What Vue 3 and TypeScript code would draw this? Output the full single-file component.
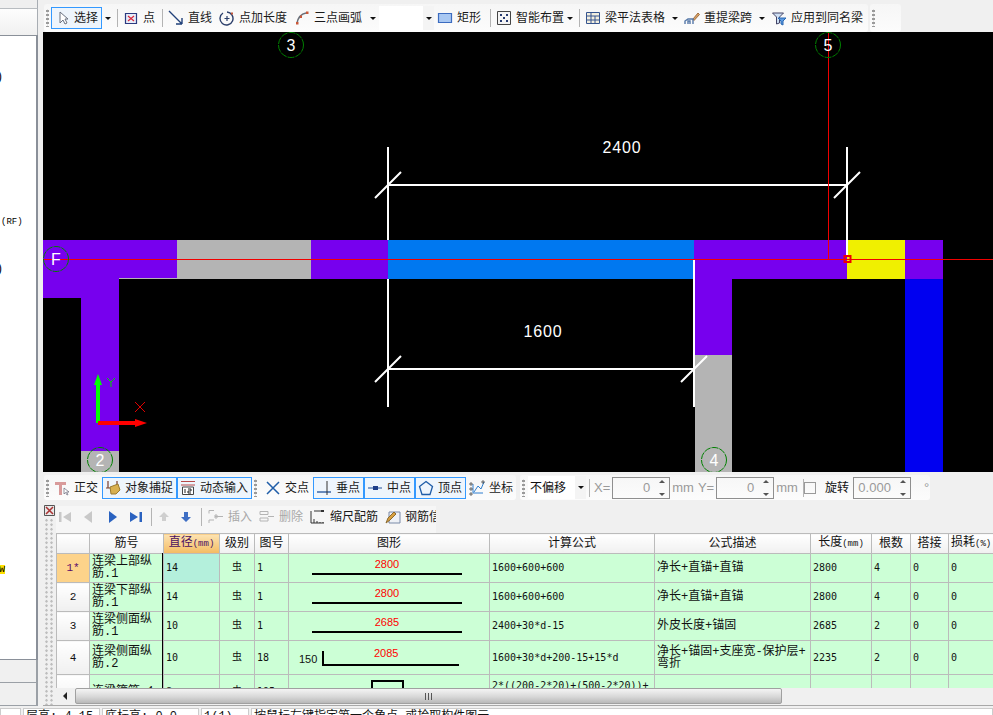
<script setup lang="ts">
type Shape = { d: string; s?: string; f?: string; w?: number }
type Tool = {
  kind?: 'tool' | 'sep' | 'grip' | 'caret' | 'combo'
  label?: string
  icon?: string
  w: number
  on?: boolean
  off?: boolean
}

const icons: Record<string, Shape[]> = {
  select: [{ d: 'M6 2v11l3-3 2 4 2-1-2-4h3z', s: '#6b7280', f: '#fff' }],
  point: [
    { d: 'M2.5 3.5h11v10h-11z', s: '#2b3a80', f: '#e8ecf8', w: 1.2 },
    { d: 'M5 6l6 5M11 6l-6 5', s: '#d9263a', w: 1.2 },
  ],
  line: [{ d: 'M1 1l13 13M14 14v-6M14 14H8', s: '#21417a', w: 1.4 }],
  ptlen: [
    { d: 'M4 3a6.5 6.5 0 1 0 4-1', s: '#2c3f6b', w: 1.4 },
    { d: 'M8 6v5M5.5 8.5h5', s: '#2c3f6b', w: 1.2 },
    { d: 'M12 2.5h2v2h-2z', f: '#c0563a' },
  ],
  arc: [
    { d: 'M3 13C4 8 7 4 12 3', s: '#6a6f78', w: 1.5 },
    { d: 'M2 12h2.5v2.5H2zM6 5.5h2V8H6zM12 1.5h2.5V4H12z', f: '#c9583a' },
  ],
  rect: [{ d: 'M1.5 3.5h13v9h-13z', s: '#3c6cc0', f: '#a9c8f2', w: 1.2 }],
  smart: [
    { d: 'M1.5 1.5h13v13h-13z', s: '#444', f: '#f4f4f4' },
    { d: 'M4 4h2v2H4zM10 4h2v2h-2zM4 10h2v2H4zM10 10h2v2h-2zM7 7h2v2H7z', f: '#263a70' },
  ],
  table: [
    { d: 'M1.5 2.5h13v11h-13z', s: '#36558f', f: '#f3efdf' },
    { d: 'M1.5 6h13M1.5 10h13M6 2.5v11M10 6v8', s: '#36558f' },
  ],
  retake: [
    { d: 'M9 9l5-6 1.5 1.5-5.5 6z', f: '#d9a066', s: '#a07040' },
    { d: 'M1 14v-3l3-2h5v5M4 14v-3h2v3', s: '#5678a8', w: 1.4 },
  ],
  apply: [
    { d: 'M1.5 3h11l-4 4v6l-3 1V7z', s: '#446', f: '#cfe0f4' },
    { d: 'M7 8h8l-3 3v4l-2-1v-3z', s: '#2867b2', f: '#5c9ae0' },
  ],
  ortho: [
    { d: 'M1 2h11v3H8v10H5V5H1z', f: '#d89a9a' },
    { d: 'M10 8v6l1.500-1.500 1.500 2.500 1-.5-1.500-2.500H15z', s: '#667', f: '#fff', w: 0.7 },
  ],
  snap: [
    { d: 'M3 1v7M12 1v7M1 8h13', s: '#7a4030', w: 1.2 },
    { d: 'M5 7l8-3 2 6-4 4H6z', f: '#d8b050', s: '#9a7a30' },
  ],
  dyn: [
    { d: 'M1 1.500h14M1 5h14', s: '#b84a4a' },
    { d: 'M2.500 7h11v7.500h-11z', s: '#444', f: '#fff' },
    { d: 'M5 9v4M8 9h3v2H8v2h3', s: '#222' },
  ],
  cross: [{ d: 'M2 2l12 12M14 2L2 14', s: '#1f5da8', w: 1.5 }],
  perp: [
    { d: 'M1 12h14', s: '#1f4f98', w: 1.3 },
    { d: 'M11 1v14', s: '#333' },
  ],
  mid: [
    { d: 'M1 8h14', s: '#1f4f98', w: 1 },
    { d: 'M6 6h5v4H6z', f: '#1f3f88' },
  ],
  vertex: [{ d: 'M8 1.500l6.500 5-2.500 8H4l-2.500-8z', s: '#1f5da8', w: 1.3 }],
  coord: [
    { d: 'M4 4v9h10M5 12l4-6 3 3 3-7', s: '#2f7fd0' },
    { d: 'M1 3h2v2H1zM1 8h2v2H1zM1 13h2v2H1zM13 1h2v2h-2z', s: '#333', w: 0.7 },
  ],
  first: [{ d: 'M2 3h2.500v10H2zM14 3v10L6 8z', f: '#c8c8c8' }],
  prev: [{ d: 'M12 2v12L4 8z', f: '#c8c8c8' }],
  next: [{ d: 'M4 2v12l8-6z', f: '#2a62c0' }],
  last: [{ d: 'M11.500 3H14v10h-2.500zM2 3v10l8-5z', f: '#2a62c0' }],
  up: [{ d: 'M8 3l5 5h-3v4H6V8H3z', f: '#cfcfcf' }],
  down: [{ d: 'M6 3h4v5h3l-5 5-5-5h3z', f: '#3f6fc4' }],
  insert: [{ d: 'M1 1.500h5M1 1.500v3M1 11h5M1 11v3M7 7.500h8M7 6h2v3H7z', s: '#b4b4b4' }],
  remove: [{ d: 'M1 2.500h8v3H1zM1 9h8v3H1zM9 7.500h6', s: '#b4b4b4' }],
  scale: [
    { d: 'M1 2v12M1 14h13M4 14v-4M7 14v-2M10 14v-1M13 14v-1', s: '#333' },
    { d: 'M4 2h10', s: '#333' },
    { d: 'M11 1h3v2h-3z', f: '#333' },
  ],
  rebar: [
    { d: 'M4 3h11v11H4z', s: '#7a8aa8', f: '#eef1f6' },
    { d: 'M1 14l2-5 6-6 2 2-6 6z', f: '#d8a040', s: '#8a6a30' },
  ],
}

const topBar: Tool[] = [
  { kind: 'grip', w: 7 },
  { label: '选择', icon: 'select', w: 51, on: true },
  { kind: 'caret', w: 11 },
  { kind: 'sep', w: 7 },
  { label: '点', icon: 'point', w: 39 },
  { kind: 'sep', w: 6 },
  { label: '直线', icon: 'line', w: 51 },
  { label: '点加长度', icon: 'ptlen', w: 75 },
  { label: '三点画弧', icon: 'arc', w: 75 },
  { kind: 'caret', w: 13 },
  { kind: 'combo', w: 55 },
  { label: '矩形', icon: 'rect', w: 53 },
  { kind: 'sep', w: 6 },
  { label: '智能布置', icon: 'smart', w: 71 },
  { kind: 'caret', w: 11 },
  { kind: 'sep', w: 7 },
  { label: '梁平法表格', icon: 'table', w: 87 },
  { kind: 'caret', w: 12 },
  { label: '重提梁跨', icon: 'retake', w: 75 },
  { kind: 'caret', w: 12 },
  { label: '应用到同名梁', icon: 'apply', w: 100 },
]

const snapBar: Tool[] = [
  { kind: 'grip', w: 7 },
  { label: '正交', icon: 'ortho', w: 51 },
  { label: '对象捕捉', icon: 'snap', w: 75, on: true },
  { label: '动态输入', icon: 'dyn', w: 75, on: true },
  { kind: 'grip', w: 10 },
  { label: '交点', icon: 'cross', w: 51 },
  { label: '垂点', icon: 'perp', w: 51, on: true },
  { label: '中点', icon: 'mid', w: 51, on: true },
  { label: '顶点', icon: 'vertex', w: 51, on: true },
  { label: '坐标', icon: 'coord', w: 49 },
]

const gridBar: Tool[] = [
  { icon: 'first', w: 18 },
  { icon: 'prev', w: 27 },
  { icon: 'next', w: 23 },
  { icon: 'last', w: 24 },
  { kind: 'sep', w: 5 },
  { icon: 'up', w: 22 },
  { icon: 'down', w: 22 },
  { kind: 'sep', w: 8 },
  { label: '插入', icon: 'insert', w: 51, off: true },
  { label: '删除', icon: 'remove', w: 51, off: true },
  { label: '缩尺配筋', icon: 'scale', w: 75 },
  { label: '钢筋信息', icon: 'rebar', w: 54 },
]

const columns = [33, 74, 56, 35, 34, 201, 165, 156, 61, 39, 38, 45]
const headers = ['筋号', '直径', '级别', '图号', '图形', '计算公式', '公式描述', '长度', '根数', '搭接', '损耗']

const rows = [
  { no: '1*', name: '连梁上部纵筋.1', dia: 14, fig: 1, val: 2800, formula: '1600+600+600', desc: '净长+直锚+直锚', len: 2800, n: 4 },
  { no: '2', name: '连梁下部纵筋.1', dia: 14, fig: 1, val: 2800, formula: '1600+600+600', desc: '净长+直锚+直锚', len: 2800, n: 4 },
  { no: '3', name: '连梁侧面纵筋.1', dia: 10, fig: 1, val: 2685, formula: '2400+30*d-15', desc: '外皮长度+锚固', len: 2685, n: 2 },
  { no: '4', name: '连梁侧面纵筋.2', dia: 10, fig: 18, val: 2085, formula: '1600+30*d+200-15+15*d', desc: '净长+锚固+支座宽-保护层+\u200b弯折', len: 2235, n: 2 },
]

const axes = [
  { label: '3', x: 291, y: 45 },
  { label: '5', x: 828, y: 45 },
  { label: 'F', x: 56, y: 259 },
  { label: '2', x: 100, y: 460 },
  { label: '4', x: 714, y: 460 },
]

const spins = [
  { prefix: 'X=', value: '0', suffix: 'mm' },
  { prefix: 'Y=', value: '0', suffix: 'mm' },
]
</script>

<template>
  <div class="app">
    <aside class="side">
      <div class="side-top"></div>
      <div class="side-tab"></div>
      <div class="side-list">
        <span class="tail t1">)</span>
        <span class="tail t2">(RF)</span>
        <span class="tail t3">)</span>
        <span class="tail t4">w</span>
      </div>
      <div class="side-foot"></div>
      <div class="side-foot"></div>
    </aside>

    <main class="main">
      <div class="bar top">
        <div class="pill">
          <template v-for="(t, i) in topBar" :key="i">
            <span v-if="t.kind === 'grip'" class="grip" :style="{ width: t.w + 'px' }"></span>
            <span v-else-if="t.kind === 'sep'" class="sep" :style="{ width: t.w + 'px' }"></span>
            <span v-else-if="t.kind === 'caret'" class="caret" :style="{ width: t.w + 'px' }"></span>
            <span v-else-if="t.kind === 'combo'" class="combo" :style="{ width: t.w + 'px' }"><i class="caret"></i></span>
            <span v-else class="tool" :class="{ on: t.on, off: t.off }" :style="{ width: t.w + 'px' }">
              <svg class="ico" viewBox="0 0 16 16">
                <path v-for="(p, k) in icons[t.icon!]" :key="k" :d="p.d" :stroke="p.s || 'none'" :fill="p.f || 'none'" :stroke-width="p.w || 1" />
              </svg>
              <span>{{ t.label }}</span>
            </span>
          </template>
        </div>
        <div class="pill tail-pill"><span class="grip"></span></div>
      </div>

      <svg class="canvas" viewBox="43 32 950 440" width="950" height="440">
        <rect x="43" y="240" width="134" height="39" fill="#7700ee" />
        <rect x="177" y="240" width="134" height="39" fill="#b4b4b4" />
        <rect x="311" y="240" width="77" height="39" fill="#7700ee" />
        <rect x="388" y="240" width="306" height="39" fill="#0078f0" />
        <rect x="694" y="240" width="153" height="39" fill="#7700ee" />
        <rect x="847" y="240" width="58" height="39" fill="#f0f000" />
        <rect x="905" y="240" width="38" height="39" fill="#7700ee" />
        <rect x="43" y="279" width="76" height="19" fill="#7700ee" />
        <rect x="81" y="298" width="38" height="153" fill="#7700ee" />
        <rect x="81" y="451" width="38" height="21" fill="#b4b4b4" />
        <rect x="119" y="278" width="58" height="1" fill="#b4b4b4" />
        <rect x="695" y="279" width="37" height="76" fill="#7700ee" />
        <rect x="695" y="355" width="37" height="117" fill="#b4b4b4" />
        <rect x="905" y="279" width="38" height="193" fill="#0000f0" />

        <g stroke="#fff" stroke-width="2" fill="none">
          <path d="M388 147V240M388 279V407M847 147V255M694 259V407" />
          <path d="M388 185H847M375 198L401 172M834 198L860 172" />
          <path d="M388 369H694M375 382L401 356M681 382L707 356" />
        </g>
        <path d="M43 259.500H993M828.500 32V259" stroke="#f00000" fill="none" />
        <rect x="844.500" y="256" width="6" height="6" stroke="#f00000" stroke-width="2" fill="none" />

        <g v-for="a in axes" :key="a.label">
          <circle :cx="a.x" :cy="a.y" r="12.500" stroke="#008000" fill="none" stroke-dasharray="7 1" />
          <text :x="a.x" :y="a.y + 6" class="cad-label">{{ a.label }}</text>
        </g>
        <text x="622" y="153" class="cad-dim">2400</text>
        <text x="543" y="337" class="cad-dim">1600</text>

        <path d="M98 423V380" stroke="#00ff00" stroke-width="4" />
        <path d="M98 374L102 385H94z" fill="#00ff00" />
        <path d="M98 423H136" stroke="#ff0000" stroke-width="4" />
        <path d="M147 423L135 419V427z" fill="#ff0000" />
        <path d="M107 378L111 382L115 378M111 382V387" stroke="#00d000" fill="none" />
        <path d="M135 402L145 412M145 402L135 412" stroke="#e00000" fill="none" />
      </svg>

      <div class="bar snap">
        <div class="pill short">
          <template v-for="(t, i) in snapBar" :key="i">
            <span v-if="t.kind === 'grip'" class="grip" :style="{ width: t.w + 'px' }"></span>
            <span v-else class="tool" :class="{ on: t.on }" :style="{ width: t.w + 'px' }">
              <svg class="ico" viewBox="0 0 16 16">
                <path v-for="(p, k) in icons[t.icon!]" :key="k" :d="p.d" :stroke="p.s || 'none'" :fill="p.f || 'none'" :stroke-width="p.w || 1" />
              </svg>
              <span>{{ t.label }}</span>
            </span>
          </template>
        </div>
        <div class="pill short offset">
          <span class="grip"></span>
          <span class="combo offset-combo">不偏移<i class="caret"></i></span>
          <span class="sep"></span>
          <template v-for="s in spins" :key="s.prefix">
            <span class="dim-label">{{ s.prefix }}</span>
            <span class="spin">{{ s.value }}<i class="arrows"></i></span>
            <span class="dim-label">{{ s.suffix }}</span>
          </template>
          <span class="sep"></span>
          <span class="check"></span>
          <span class="rotate">旋转</span>
          <span class="spin">0.000<i class="arrows"></i></span>
          <span class="dim-label deg">°</span>
        </div>
      </div>

      <div class="lower">
        <div class="strip">
          <svg class="close" viewBox="0 0 11 11"><path d="M.5 .5h10v10H.500z" fill="#e8e8e8" stroke="#555" /><path d="M2 2l7 7M9 2l-7 7" stroke="#a33" stroke-width="1.500" /></svg>
          <div class="dots"></div>
        </div>
        <div class="sheet">
          <div class="gridbar">
            <template v-for="(t, i) in gridBar" :key="i">
              <span v-if="t.kind === 'sep'" class="sep" :style="{ width: t.w + 'px' }"></span>
              <span v-else class="tool" :class="{ off: t.off, solo: !t.label }" :style="{ width: t.w + 'px' }">
                <svg class="ico" viewBox="0 0 16 16">
                  <path v-for="(p, k) in icons[t.icon!]" :key="k" :d="p.d" :stroke="p.s || 'none'" :fill="p.f || 'none'" :stroke-width="p.w || 1" />
                </svg>
                <span v-if="t.label">{{ t.label }}</span>
              </span>
            </template>
          </div>

          <div class="table-wrap">
            <table>
              <colgroup>
                <col v-for="(c, i) in columns" :key="i" :style="{ width: c + 'px' }" />
              </colgroup>
              <thead>
                <tr>
                  <th></th>
                  <th v-for="h in headers" :key="h" :class="{ picked: h === '直径' }">
                    {{ h }}<small v-if="h === '直径' || h === '长度'">(mm)</small><small v-if="h === '损耗'">(%)</small>
                  </th>
                </tr>
              </thead>
              <tbody>
                <tr v-for="(r, i) in rows" :key="r.no" :class="{ tall: i === 3 }">
                  <td class="head" :class="{ picked: i === 0 }">{{ r.no }}</td>
                  <td class="name">{{ r.name }}</td>
                  <td class="num" :class="{ focus: i === 0 }">{{ r.dia }}</td>
                  <td class="grade">虫</td>
                  <td class="num">{{ r.fig }}</td>
                  <td class="figure">
                    <div v-if="r.fig === 1" class="bar-fig">
                      <span class="fig-val">{{ r.val }}</span>
                    </div>
                    <div v-else class="hook-fig">
                      <span class="hook-len">150</span>
                      <div class="hook"><span class="fig-val">{{ r.val }}</span></div>
                    </div>
                  </td>
                  <td class="num">{{ r.formula }}</td>
                  <td class="desc">{{ r.desc }}</td>
                  <td class="num">{{ r.len }}</td>
                  <td class="num">{{ r.n }}</td>
                  <td class="num">0</td>
                  <td class="num">0</td>
                </tr>
                <tr class="tall">
                  <td class="head"></td>
                  <td class="name">连梁箍筋.1</td>
                  <td class="num">8</td>
                  <td class="grade">虫</td>
                  <td class="num">195</td>
                  <td class="figure"><div class="stirrup"></div></td>
                  <td class="num wrap">2*((200-2*20)+(500-2*20))+</td>
                  <td class="desc"></td>
                  <td class="num"></td>
                  <td class="num"></td>
                  <td class="num"></td>
                  <td class="num"></td>
                </tr>
              </tbody>
            </table>
            <div class="frozen"></div>
          </div>

          <div class="hscroll">
            <span class="left-arrow"></span>
            <div class="thumb"><i></i></div>
          </div>
        </div>
      </div>
    </main>

    <footer class="status">
      <span class="cell c0"></span>
      <span class="cell c1">层高: 4.15</span>
      <span class="cell c2">底标高: 0.0</span>
      <span class="cell c3">1(1)</span>
      <span class="cell c4">按鼠标左键指定第一个角点,或拾取构件图元</span>
    </footer>
  </div>
</template>

<style>
html,
body {
  margin: 0;
  overflow: hidden;
  background: #f0f0f0;
}
</style>

<style scoped>
.app {
  position: relative;
  display: grid;
  grid-template-columns: 43px 950px;
  grid-template-rows: 706px 9px;
  width: 993px;
  height: 715px;
  overflow: hidden;
  background: #f0f0f0;
  color: #111;
  font: 12px/16px "Liberation Sans", "Noto Sans CJK SC", sans-serif;
}
.side {
  display: flex;
  flex-direction: column;
  width: 38px;
}
.side-top {
  height: 8px;
  background: #efefef;
  border-right: 1px solid #a8adb3;
  border-bottom: 1px solid #b8bcc0;
}
.side-tab {
  height: 26px;
  background: linear-gradient(#fdfdfd, #f0f0f0);
  border-right: 1px solid #a8adb3;
}
.side-list {
  position: relative;
  height: 623px;
  overflow: hidden;
  background: #fff;
  border: solid #8a9099;
  border-width: 1px 2px 1px 0;
}
.tail {
  position: absolute;
  font: 12px/12px "Liberation Mono", monospace;
  color: #000;
}
.t1 { top: 35px; left: -4px; }
.t2 { top: 180px; left: 1px; font-size: 9px; }
.t3 { top: 227px; left: -4px; }
.t4 { top: 529px; left: -1px; background: #ffe000; font-size: 10px; line-height: 9px; }
.side-foot {
  height: 22px;
  background: #f0f0f0;
  border-right: 2px solid #9ba0a6;
  border-bottom: 1px solid #9ba0a6;
}

.main {
  display: flex;
  flex-direction: column;
  min-width: 0;
}
.bar {
  display: flex;
  gap: 2px;
}
.top {
  height: 32px;
  padding-top: 4px;
  box-sizing: border-box;
  padding-left: 1px;
}
.pill {
  display: flex;
  align-items: center;
  flex: none;
  height: 28px;
  width: 824px;
  box-sizing: border-box;
  background: linear-gradient(#f6f6f6, #fcfcfc);
  border-radius: 3px;
}
.tail-pill {
  width: 31px;
}
.grip {
  flex: none;
  width: 7px;
  height: 18px;
  background: radial-gradient(circle, #9a9a9a 0 1.200px, transparent 1.600px) 1px 0 / 5px 4px repeat-y;
}
.sep {
  position: relative;
  flex: none;
  width: 6px;
  height: 18px;
}
.sep::after {
  content: "";
  position: absolute;
  left: 50%;
  top: 0;
  bottom: 0;
  width: 1px;
  background: #b4b4b4;
}
.caret {
  display: inline-flex;
  flex: none;
  align-items: center;
  justify-content: center;
}
.caret::after {
  content: "";
  border: 3px solid transparent;
  border-top: 3px solid #111;
  border-bottom: 0;
}
.combo {
  display: flex;
  flex: none;
  align-items: center;
  justify-content: flex-end;
  height: 24px;
  margin-left: 0;
  background: #fff;
}
.combo .caret {
  width: 11px;
  height: 100%;
  background: #f4f4f4;
}
.tool {
  display: flex;
  flex: none;
  align-items: center;
  gap: 4px;
  box-sizing: border-box;
  height: 22px;
  padding-left: 3px;
  overflow: hidden;
  white-space: nowrap;
  color: #1a1a1a;
}
.tool.on {
  border: 1px solid #3399ff;
  padding-left: 2px;
  background: #eef5fc;
}
.tool.off {
  color: #a8a8a8;
}
.tool.solo {
  justify-content: center;
  padding-left: 0;
}
.ico {
  flex: none;
  width: 16px;
  height: 16px;
}
.canvas {
  display: block;
  flex: none;
  background: #000;
}
.cad-label,
.cad-dim {
  fill: #fff;
  text-anchor: middle;
  font-family: "Liberation Sans", sans-serif;
  font-weight: 400;
}
.cad-label {
  font-size: 16px;
}
.cad-dim {
  font-size: 16px;
  letter-spacing: 0.8px;
}
.snap {
  height: 31px;
  padding: 3px 0 0 1px;
  box-sizing: border-box;
  gap: 4px;
}
.short {
  width: 472px;
  height: 25px;
}
.offset {
  width: 410px;
}
.offset-combo {
  width: 58px;
  height: 23px;
  margin-left: 1px;
  justify-content: space-between;
  padding-left: 2px;
  box-sizing: border-box;
}
.dim-label {
  flex: none;
  margin: 0 2px;
  color: #9a9a9a;
  font-size: 13px;
}
.deg {
  margin-left: 13px;
}
.spin {
  display: flex;
  flex: none;
  align-items: center;
  justify-content: flex-end;
  box-sizing: border-box;
  width: 58px;
  height: 22px;
  border: 1px solid #8f8f8f;
  color: #9a9a9a;
  font-size: 13px;
}
.arrows {
  position: relative;
  width: 14px;
  height: 100%;
  margin-left: 5px;
}
.arrows::before,
.arrows::after {
  content: "";
  position: absolute;
  left: 4px;
  border: 3px solid transparent;
}
.arrows::before {
  top: 2px;
  border-top: 0;
  border-bottom-color: #555;
}
.arrows::after {
  bottom: 2px;
  border-bottom: 0;
  border-top-color: #555;
}
.check {
  flex: none;
  width: 10px;
  height: 10px;
  margin: 0 9px 0 -2px;
  border: 1px solid #9a9a9a;
}
.rotate {
  flex: none;
  margin-right: 4px;
}
.lower {
  display: flex;
  flex: 1;
  min-height: 0;
  border-bottom: 1px solid #a8a8a8;
}
.strip {
  display: flex;
  flex-direction: column;
  flex: none;
  width: 13px;
  padding: 2px 0 0 1px;
  box-sizing: border-box;
}
.close {
  display: block;
  flex: none;
  width: 11px;
  height: 11px;
}
.dots {
  flex: 1;
  width: 10px;
  margin-top: 2px;
  background: radial-gradient(circle, #bdbdbd 0 1.100px, transparent 1.400px) 0 0 / 5px 4.500px;
}
.sheet {
  flex: 1;
  min-width: 0;
  display: flex;
  flex-direction: column;
}
.gridbar {
  display: flex;
  align-items: center;
  flex: none;
  box-sizing: border-box;
  width: 380px;
  height: 30px;
  padding-bottom: 2px;
  overflow: hidden;
  background: linear-gradient(#f0f0f0 3px, #f6f6f6 3px);
}
.table-wrap {
  position: relative;
  flex: none;
  height: 155px;
  overflow: hidden;
}
table {
  table-layout: fixed;
  width: 937px;
  border-collapse: collapse;
  font: 12px/12px "Liberation Mono", "Noto Sans CJK SC", monospace;
}
th,
td {
  box-sizing: border-box;
  padding: 0 2px;
  border: 1px solid #bbb;
  overflow: hidden;
}
th {
  height: 20px;
  background: linear-gradient(#fff, #f0f0f0);
  font-weight: 400;
  text-align: center;
  color: #111;
  white-space: nowrap;
}
th small {
  font-size: 9px;
}
th.picked {
  background: linear-gradient(#fde3b2, #f4bb62);
  color: #4a1060;
}
td {
  height: 29px;
  background: #ccffd6;
}
.tall td {
  height: 34px;
}
td.head {
  background: linear-gradient(#fff, #efefef);
  text-align: center;
  font-size: 11px;
}
td.head.picked {
  background: #fdd38a;
  color: #5a0a6a;
}
.name {
  word-break: break-all;
}
.num {
  font: 10px/12px "DejaVu Sans Mono", monospace;
  white-space: nowrap;
}
.num.wrap {
  white-space: normal;
  word-break: break-all;
  vertical-align: top;
  padding-top: 5px;
}
td.focus {
  background: #b4f0dc;
}
.grade {
  text-align: center;
  font-size: 10px;
}
.desc {
  padding-right: 1px;
  word-break: break-all;
}
.bar-fig {
  position: relative;
  box-sizing: border-box;
  height: 14px;
  margin: 0 25px 0 21px;
  border-bottom: 2px solid #000;
  text-align: center;
}
.fig-val {
  position: relative;
  top: -3px;
  color: #f00;
  font: 11px/12px "Liberation Sans", sans-serif;
}
.hook-fig {
  display: flex;
  align-items: flex-end;
  height: 16px;
  padding-left: 8px;
}
.hook-len {
  width: 23px;
  font: 11px/14px "Liberation Sans", sans-serif;
}
.hook {
  flex: none;
  box-sizing: border-box;
  width: 137px;
  height: 15px;
  padding-left: 50px;
  border-left: 2px solid #000;
  border-bottom: 2px solid #000;
  line-height: 12px;
}
.hook .fig-val {
  top: -4px;
}
.stirrup {
  width: 33px;
  height: 24px;
  margin: 0 auto;
  transform: translateX(-2px);
  border: 2px solid #000;
  box-sizing: border-box;
}
.frozen {
  position: absolute;
  left: 106px;
  top: 20px;
  bottom: 0;
  width: 1px;
  background: #000;
}
.hscroll {
  display: flex;
  align-items: stretch;
  flex: none;
  height: 16px;
  background: #f0f0f0;
}
.left-arrow {
  position: relative;
  flex: none;
  width: 19px;
}
.left-arrow::after {
  content: "";
  position: absolute;
  left: 7px;
  top: 4px;
  border: 4px solid transparent;
  border-left: 0;
  border-right-color: #222;
}
.thumb {
  display: flex;
  align-items: center;
  justify-content: center;
  box-sizing: border-box;
  width: 707px;
  background: linear-gradient(#f4f4f4, #d8d8d8 55%, #b8b8b8);
  border: 1px solid #a0a0a0;
  border-radius: 2px;
}
.thumb i {
  width: 7px;
  height: 7px;
  background: repeating-linear-gradient(90deg, #555 0 1px, transparent 1px 3px);
}
.status {
  display: flex;
  grid-column: 1 / 3;
  gap: 2px;
  height: 20px;
  padding-top: 2px;
  font: 12px/16px "Liberation Mono", "Noto Sans CJK SC", monospace;
}
.cell {
  box-sizing: border-box;
  flex: none;
  height: 20px;
  padding-left: 2px;
  background: #fff;
  border: 1px solid #ccc;
  white-space: nowrap;
  overflow: hidden;
}
.c0 { width: 21px; }
.c1 { width: 77px; }
.c2 { width: 97px; }
.c3 { width: 48px; }
.c4 { flex: 1; }
</style>
